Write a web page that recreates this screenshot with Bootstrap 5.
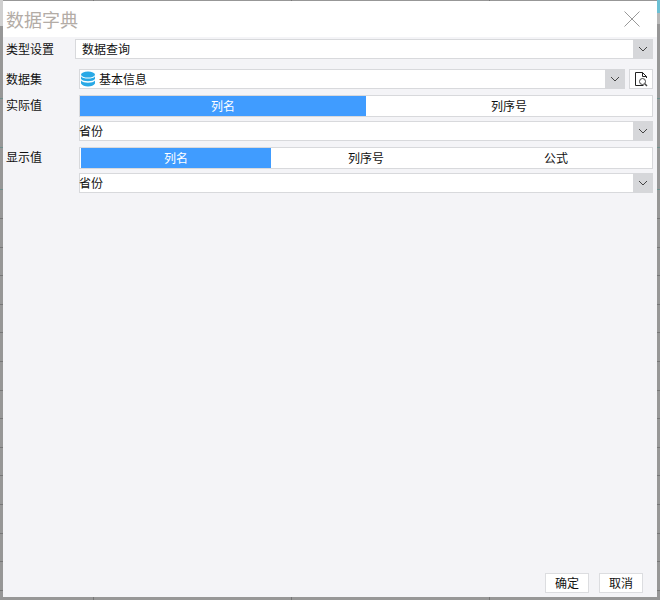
<!DOCTYPE html>
<html lang="zh">
<head>
<meta charset="utf-8">
<link href="https://cdn.jsdelivr.net/npm/bootstrap@5.3.0/dist/css/bootstrap.min.css" rel="stylesheet">
<style>
html,body{margin:0;height:600px;overflow:hidden;}
body{
  font-family:"Noto Sans CJK SC","Liberation Sans",sans-serif;font-size:12px;color:#111;line-height:1;
  background-color:#979797;
  background-image:
    linear-gradient(#6cc0d4,#6cc0d4),linear-gradient(#b8b8b8,#b8b8b8),linear-gradient(#cfcfcf,#cfcfcf),
    repeating-linear-gradient(to bottom,#777 0,#777 1px,transparent 1px,transparent 28.6px),
    linear-gradient(#6f8f8c,#6f8f8c),linear-gradient(#6f8f8c,#6f8f8c),linear-gradient(#6f8f8c,#6f8f8c),
    linear-gradient(#777,#777),linear-gradient(#777,#777),linear-gradient(#777,#777);
  background-size:3px 13px,3px 24px,3px 26px,100% 382px,100% 1px,100% 1px,100% 1px,1px 100%,1px 100%,1px 100%;
  background-position:657px 0,657px 0,0 0,0 218px,0 98px,0 147px,0 189px,93px 0,291px 0,489px 0;
  background-repeat:no-repeat;
}
.dlg{width:654px;height:596px;margin:1px 0 0 3px;background:#f4f4f7;}
.head{height:36px;background:#fff;padding:0 17px 0 3px;}
.ttl{font-size:18px;color:#b3aca6;}
.rows{padding:2px 4px 0 3px;}
.lbl{flex:none;width:73px;}
.lbl-short{width:69px;}
.lift{position:relative;top:-1px;}
.gap6{margin-top:6px;}
.gap4{margin-top:4px;}
.gap10{margin-top:10px;}
.inp{height:20px;background:#fff;border:1px solid #d8d9dc;border-right:0;min-width:0;}
.pad-query{padding-left:6px;}
.txt-tight{margin-left:-1px;}
.db-ico{margin-right:3px;}
.arrow{flex:none;width:20px;height:20px;background:#d6d7da;}
.tabs-bar{height:22px;background:#fff;border:1px solid #d8d9dc;}
.tabs-tri{padding:0 1px;}
.tb{flex:1 1 0;}
.tb-on{background:#409cff;color:#fff;}
.doc-btn{flex:none;width:24px;height:20px;margin-left:4px;background:#fff;border:1px solid #d8d9dc;}
.foot{padding:0 14px 4px 0;}
.foot-btn{width:44px;height:20px;background:#fff;border:1px solid #dcdde0;}
.gap-ten{gap:10px;}
</style>
</head>
<body>
<div class="dlg d-flex flex-column">
  <div class="head d-flex align-items-center justify-content-between">
    <span class="ttl">数据字典</span>
    <svg width="16" height="16" viewBox="0 0 16 16"><path d="M.5.5L15.5 15.5M15.5.5L.5 15.5" stroke="#999" fill="none"/></svg>
  </div>
  <div class="rows">
    <div class="d-flex align-items-center">
      <span class="lbl lbl-short">类型设置</span>
      <div class="inp pad-query flex-grow-1 d-flex align-items-center">数据查询</div>
      <div class="arrow d-flex align-items-center justify-content-center"><svg width="10" height="6" viewBox="0 0 10 6"><path d="M1 1L5 5L9 1" stroke="#444" fill="none"/></svg></div>
    </div>
    <div class="d-flex align-items-center gap10">
      <span class="lbl">数据集</span>
      <div class="inp flex-grow-1 d-flex align-items-center">
        <svg class="db-ico flex-shrink-0" width="16" height="16" viewBox="0 0 16 16"><ellipse cx="8" cy="3.6" rx="7" ry="3" fill="#29a9e6"/><path d="M1 5.2C2 7 5 7.6 8 7.6S14 7 15 5.2V8C14 9.6 11 10.2 8 10.2S2 9.6 1 8Z" fill="#29a9e6"/><path d="M1 9.6C2 11.3 5 11.8 8 11.8S14 11.3 15 9.6V12.6C14 14.6 11 15.4 8 15.4S2 14.6 1 12.6Z" fill="#29a9e6"/></svg>
        基本信息
      </div>
      <div class="arrow d-flex align-items-center justify-content-center"><svg width="10" height="6" viewBox="0 0 10 6"><path d="M1 1L5 5L9 1" stroke="#444" fill="none"/></svg></div>
      <div class="doc-btn d-flex align-items-center justify-content-center"><svg width="14" height="16" viewBox="0 0 14 16"><path d="M9.5 14.5H1.5V1.5H8.5L12.5 5.5V7M8.5 1.5V5.5H12.5" stroke="#222" fill="none"/><circle cx="8.5" cy="10.5" r="3" stroke="#444" fill="none"/><path d="M10.8 12.8L13 15" stroke="#444" stroke-width="1.5" fill="none"/></svg></div>
    </div>
    <div class="d-flex gap6">
      <span class="lbl lift d-flex align-items-center">实际值</span>
      <div class="tabs-bar flex-grow-1 d-flex">
        <div class="tb tb-on d-flex align-items-center justify-content-center">列名</div>
        <div class="tb d-flex align-items-center justify-content-center">列序号</div>
      </div>
    </div>
    <div class="d-flex gap4">
      <span class="lbl"></span>
      <div class="inp flex-grow-1 d-flex align-items-center"><span class="txt-tight">省份</span></div>
      <div class="arrow d-flex align-items-center justify-content-center"><svg width="10" height="6" viewBox="0 0 10 6"><path d="M1 1L5 5L9 1" stroke="#444" fill="none"/></svg></div>
    </div>
    <div class="d-flex gap6">
      <span class="lbl lift d-flex align-items-center">显示值</span>
      <div class="tabs-bar tabs-tri flex-grow-1 d-flex">
        <div class="tb tb-on d-flex align-items-center justify-content-center">列名</div>
        <div class="tb d-flex align-items-center justify-content-center">列序号</div>
        <div class="tb d-flex align-items-center justify-content-center">公式</div>
      </div>
    </div>
    <div class="d-flex gap4">
      <span class="lbl"></span>
      <div class="inp flex-grow-1 d-flex align-items-center"><span class="txt-tight">省份</span></div>
      <div class="arrow d-flex align-items-center justify-content-center"><svg width="10" height="6" viewBox="0 0 10 6"><path d="M1 1L5 5L9 1" stroke="#444" fill="none"/></svg></div>
    </div>
  </div>
  <div class="foot mt-auto d-flex justify-content-end gap-ten">
    <div class="foot-btn d-flex align-items-center justify-content-center">确定</div>
    <div class="foot-btn d-flex align-items-center justify-content-center">取消</div>
  </div>
</div>
</body>
</html>
